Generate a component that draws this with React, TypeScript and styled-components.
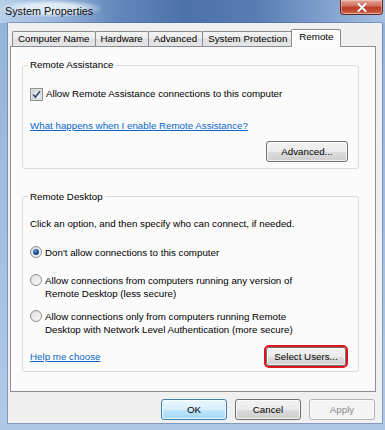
import styled, { createGlobalStyle } from 'styled-components';

const GlobalStyle = createGlobalStyle`
  html, body {
    margin: 0;
    padding: 0;
  }
  body {
    font-family: "Liberation Sans", Arial, sans-serif;
    font-size: 9.75px;
    color: #000;
  }
  * {
    box-sizing: border-box;
  }
`;

const tabs = ['Computer Name', 'Hardware', 'Advanced', 'System Protection', 'Remote'];

const CheckMark = () => (
  <svg width="13" height="13" viewBox="0 0 13 13">
    <defs>
      <linearGradient id="cbfill" x1="0" y1="0" x2="1" y2="1">
        <stop offset="0" stopColor="#d8d8d8" />
        <stop offset="1" stopColor="#fbfbfb" />
      </linearGradient>
    </defs>
    <rect x="0.5" y="0.5" width="12" height="12" fill="#f6f6f6" stroke="#8e8f8f" />
    <rect x="2" y="2" width="9" height="9" fill="url(#cbfill)" stroke="#b4b4b4" strokeWidth="0.6" />
    <path d="M3.2 6.6 L5.4 9.1 L10 3.2" fill="none" stroke="#3b4f86" strokeWidth="1.7" />
  </svg>
);

const RadioDot = ({ checked }: { checked?: boolean }) => (
  <svg width="12" height="12" viewBox="0 0 12 12">
    <defs>
      <linearGradient id="rdfill" x1="0" y1="0" x2="1" y2="1">
        <stop offset="0" stopColor="#dcdcdc" />
        <stop offset="1" stopColor="#fdfdfd" />
      </linearGradient>
      <radialGradient id="rddot" cx="0.4" cy="0.35" r="0.7">
        <stop offset="0" stopColor="#6fa4e0" />
        <stop offset="0.5" stopColor="#1f5aa0" />
        <stop offset="1" stopColor="#0e3566" />
      </radialGradient>
    </defs>
    <circle cx="6" cy="6" r="5.5" fill="url(#rdfill)" stroke="#8c8c8c" />
    {checked && <circle cx="6" cy="6" r="3" fill="url(#rddot)" />}
  </svg>
);

const CloseGlyph = () => (
  <svg width="10" height="9" viewBox="0 0 10 9">
    <path d="M1.5 1 L8.5 8 M8.5 1 L1.5 8" stroke="#3a1410" strokeWidth="2.8" strokeLinecap="square" opacity="0.35" />
    <path d="M1.5 1 L8.5 8 M8.5 1 L1.5 8" stroke="#ffffff" strokeWidth="2" strokeLinecap="square" />
  </svg>
);

export default function App() {
  return (
    <>
      <GlobalStyle />
      <Window>
        <TitleBar>
          <Title>System Properties</Title>
          <CloseButton>
            <CloseGlyph />
          </CloseButton>
        </TitleBar>
        <Client>
          <TabStrip>
            {tabs.map((t) => (
              <Tab key={t} $active={t === 'Remote'}>
                {t}
              </Tab>
            ))}
          </TabStrip>
          <Panel>
            <Group $top={12}>
              <Legend>Remote Assistance</Legend>
              <GroupBody>
                <OptionRow $mt={16}>
                  <CheckMark />
                  <OptionText>Allow Remote Assistance connections to this computer</OptionText>
                </OptionRow>
                <LinkText $mt={18}>What happens when I enable Remote Assistance?</LinkText>
                <ButtonLine $mt={9}>
                  <WinButton $w={82}>Advanced...</WinButton>
                </ButtonLine>
              </GroupBody>
            </Group>
            <Group $top={22} $pb={5}>
              <Legend>Remote Desktop</Legend>
              <GroupBody>
                <Line $mt={14}>Click an option, and then specify who can connect, if needed.</Line>
                <OptionRow $mt={16}>
                  <RadioDot checked />
                  <OptionText>Don&apos;t allow connections to this computer</OptionText>
                </OptionRow>
                <OptionRow $mt={15}>
                  <RadioDot />
                  <OptionText>
                    Allow connections from computers running any version of
                    <br />
                    Remote Desktop (less secure)
                  </OptionText>
                </OptionRow>
                <OptionRow $mt={10}>
                  <RadioDot />
                  <OptionText>
                    Allow connections only from computers running Remote
                    <br />
                    Desktop with Network Level Authentication (more secure)
                  </OptionText>
                </OptionRow>
                <FooterLine>
                  <LinkText $mt={3}>Help me choose</LinkText>
                  <WinButton $w={80} $highlight>
                    Select Users...
                  </WinButton>
                </FooterLine>
              </GroupBody>
            </Group>
          </Panel>
          <DialogButtons>
            <WinButton $w={66} $default>
              OK
            </WinButton>
            <WinButton $w={66}>Cancel</WinButton>
            <WinButton $w={66} disabled>
              Apply
            </WinButton>
          </DialogButtons>
        </Client>
      </Window>
    </>
  );
}

const Window = styled.div`
  width: 385px;
  height: 430px;
  display: flex;
  flex-direction: column;
  overflow: hidden;
  background: linear-gradient(180deg, #94b2d8 0%, #a5c0e1 60%, #b0c9e6 100%);
`;

const TitleBar = styled.div`
  height: 23px;
  flex: none;
  display: flex;
  justify-content: space-between;
  align-items: flex-start;
  background: linear-gradient(
    90deg,
    #b8cfe9 0%,
    #9ab7dc 14%,
    #6488bc 30%,
    #4c72aa 48%,
    #587cb2 66%,
    #84a3d0 86%,
    #a6c0e1 100%
  );
`;

const Title = styled.span`
  font-size: 10.8px;
  line-height: 12px;
  padding: 5px 8px 0 5px;
  color: #0c0c0c;
  border-radius: 8px;
  background: radial-gradient(ellipse at center, rgba(235, 243, 251, 0.85) 40%, rgba(235, 243, 251, 0) 75%);
`;

const CloseButton = styled.div`
  width: 43px;
  height: 15px;
  margin-right: 2px;
  display: flex;
  align-items: center;
  justify-content: center;
  border: 1px solid #5e2a26;
  border-top: none;
  border-radius: 0 0 4px 4px;
  background: linear-gradient(180deg, #e3a99a 0%, #d0715e 40%, #b93a26 55%, #c4533c 85%, #dc8a6e 100%);
  box-shadow: inset 0 0 0 1px rgba(255, 220, 210, 0.45);
`;

const Client = styled.div`
  flex: 1;
  margin: 0 3px 7px 8px;
  padding: 6px 0 0 2px;
  display: flex;
  flex-direction: column;
  background: #f0f0f0;
  box-shadow: 0 0 0 1px rgba(70, 100, 140, 0.45);
`;

const TabStrip = styled.div`
  height: 18px;
  display: flex;
  align-items: flex-end;
  padding-left: 2px;
  position: relative;
  z-index: 1;
`;

const Tab = styled.div<{ $active?: boolean }>`
  position: relative;
  height: ${(p) => (p.$active ? 18 : 15)}px;
  margin: 0 ${(p) => (p.$active ? -2 : 0)}px ${(p) => (p.$active ? 0 : 1)}px
    ${(p) => (p.$active ? -2 : -1)}px;
  padding: ${(p) => (p.$active ? '1px 7px 0' : '0 5px')};
  display: flex;
  align-items: ${(p) => (p.$active ? 'flex-start' : 'center')};
  border: 1px solid #898c95;
  border-bottom: none;
  border-radius: 2px 2px 0 0;
  z-index: ${(p) => (p.$active ? 2 : 1)};
  white-space: nowrap;
  line-height: 12px;
  background: ${(p) =>
    p.$active ? '#fcfcfc' : 'linear-gradient(180deg, #f4f4f4 0%, #ebebeb 50%, #dedede 51%, #e6e6e6 100%)'};

  &:first-child {
    margin-left: 0;
  }
`;

const Panel = styled.div`
  width: 366px;
  height: 346px;
  margin-top: -1px;
  padding: 0 16px 0 11px;
  display: flex;
  flex-direction: column;
  background: #fbfbfb;
  border: 1px solid #898c95;
`;

const Group = styled.fieldset<{ $top: number; $pb?: number }>`
  margin: ${(p) => p.$top}px 0 0;
  padding: 0 7px ${(p) => p.$pb ?? 6}px;
  border: 1px solid #d5dfe5;
  border-radius: 3px;
  min-width: 0;
`;

const Legend = styled.legend`
  padding: 0 2px;
  margin-left: -2px;
  line-height: 12px;
  color: #000;
`;

const GroupBody = styled.div`
  display: flex;
  flex-direction: column;
`;

const Line = styled.div<{ $mt?: number }>`
  margin-top: ${(p) => p.$mt ?? 0}px;
  line-height: 13px;
`;

const OptionRow = styled.div<{ $mt?: number }>`
  margin-top: ${(p) => p.$mt ?? 0}px;
  display: flex;
  align-items: flex-start;
  gap: 3px;

  svg {
    flex: none;
    margin-top: 0.5px;
  }
`;

const OptionText = styled.span`
  line-height: 13px;
`;

const LinkText = styled.span<{ $mt?: number }>`
  margin-top: ${(p) => p.$mt ?? 0}px;
  line-height: 13px;
  color: #0a66c8;
  text-decoration: underline;
  align-self: flex-start;
`;

const ButtonLine = styled.div<{ $mt?: number }>`
  margin-top: ${(p) => p.$mt ?? 0}px;
  display: flex;
  justify-content: flex-end;
  padding-right: 3px;
`;

const FooterLine = styled.div`
  margin-top: 11px;
  display: flex;
  align-items: flex-start;
  justify-content: space-between;
  padding-right: 3px;
`;

const WinButton = styled.button<{ $w: number; $default?: boolean; $highlight?: boolean }>`
  width: ${(p) => p.$w}px;
  height: ${(p) => (p.$highlight ? 19 : 21)}px;
  margin: ${(p) => (p.$highlight ? '0 2px' : '0')};
  padding: 0;
  font-family: "Liberation Sans", Arial, sans-serif;
  font-size: 9.75px;
  color: #000;
  border: 1px solid ${(p) => (p.$default ? '#3c7fb1' : '#707070')};
  border-radius: 3px;
  background: ${(p) =>
    p.$default
      ? 'linear-gradient(180deg, #eaf6fd 0%, #d9f0fc 50%, #bee6fd 51%, #a7d9f5 100%)'
      : 'linear-gradient(180deg, #f2f2f2 0%, #ebebeb 50%, #dddddd 51%, #cfcfcf 100%)'};
  box-shadow: inset 0 0 0 1px rgba(255, 255, 255, 0.75);
  outline: ${(p) => (p.$highlight ? '2px solid #e0141e' : 'none')};
  outline-offset: 0;

  &:disabled {
    color: #8a8a8a;
    border-color: #adb2b5;
    background: #f4f4f4;
  }
`;

const DialogButtons = styled.div`
  margin-top: 7px;
  display: flex;
  justify-content: flex-end;
  gap: 8px;
  padding-right: 7px;
`;
